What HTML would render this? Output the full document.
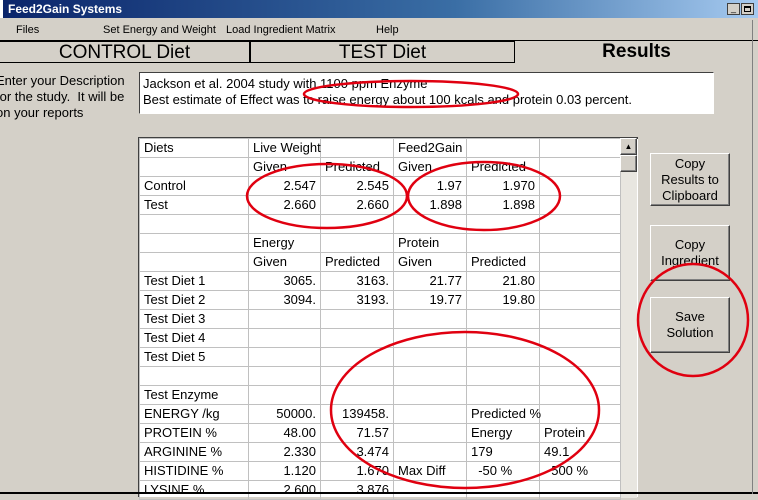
<!DOCTYPE html>
<html><head><style>
*{margin:0;padding:0;box-sizing:border-box}
body{width:758px;height:494px;background:#d4d0c8;font-family:"Liberation Sans",sans-serif;position:relative;overflow:hidden;color:#000}
.a{position:absolute}
#title{left:0;top:0;width:758px;height:18px;background:linear-gradient(90deg,#0a246a,#3a6ea5 60%,#a6caf0);color:#fff;font-weight:bold;font-size:12px;line-height:18px;padding-left:8px}
.menu{font-size:11px;top:24px}
.tab{font-size:19px;top:40px;height:22px;line-height:22px;text-align:center;border:1px solid #000;border-bottom:none;background:#d4d0c8}
table{border-collapse:collapse;table-layout:fixed;font-size:13px}
td{height:19px;border:1px solid #c0c0c0;padding:0 4px;white-space:nowrap;overflow:visible;line-height:18px}
td.r{text-align:right}
.btn{background:#d4d0c8;border:1px solid;border-color:#fff #404040 #404040 #fff;box-shadow:inset -1px -1px #808080;font-size:13px;text-align:center;line-height:16px;display:flex;align-items:center;justify-content:center}
</style></head><body>
<div class="a" id="title">Feed2Gain Systems</div>
<div class="a" style="left:0;top:0;width:3px;height:18px;background:#fff"></div>
<div class="a" style="left:727px;top:3px;width:13px;height:12px;background:#d4d0c8;border:1px solid #404040;font-size:9px;line-height:9px;text-align:center">_</div>
<div class="a" style="left:741px;top:3px;width:13px;height:12px;background:#d4d0c8;border:1px solid #404040"><div style="margin:2px;width:7px;height:6px;border:1px solid #000;border-top-width:2px"></div></div>
<div class="a menu" style="left:16px">Files</div>
<div class="a menu" style="left:103px">Set Energy and Weight</div>
<div class="a menu" style="left:226px">Load Ingredient Matrix</div>
<div class="a menu" style="left:376px">Help</div>
<div class="a" style="left:0;top:40px;width:758px;height:1px;background:#000"></div>
<div class="a tab" style="left:0;width:250px;border-left:none;border-bottom:1px solid #000;top:41px">CONTROL Diet</div>
<div class="a tab" style="left:250px;width:265px;border-bottom:1px solid #000;top:41px">TEST Diet</div>
<div class="a" style="left:515px;top:41px;width:243px;height:22px;font-size:19px;font-weight:bold;line-height:22px;text-align:center">Results</div>
<div class="a" style="left:0;top:73px;font-size:13px;line-height:16px;width:135px;margin-left:-4px">Enter your Description<br>for the study.&nbsp; It will be<br>on your reports</div>
<div class="a" style="left:139px;top:72px;width:575px;height:42px;background:#fff;border:1px solid;border-color:#404040 #fff #fff #404040;font-size:13px;line-height:16px;padding:3px 3px">Jackson et al. 2004 study with 1100 ppm Enzyme<br>Best estimate of Effect was to raise energy about 100 kcals and protein 0.03 percent.</div>
<div class="a" style="left:138px;top:137px;width:500px;height:360px;background:#fff;border-left:2px solid #404040;border-top:2px solid #404040"></div>
<table class="a" style="left:139px;top:138px;width:481px">
<colgroup><col style="width:109px"><col style="width:72px"><col style="width:73px"><col style="width:73px"><col style="width:73px"><col style="width:81px"></colgroup>
<tr><td>Diets</td><td>Live Weight</td><td></td><td>Feed2Gain</td><td></td><td></td></tr>
<tr><td></td><td>Given</td><td>Predicted</td><td>Given</td><td>Predicted</td><td></td></tr>
<tr><td>Control</td><td class="r">2.547</td><td class="r">2.545</td><td class="r">1.97</td><td class="r">1.970</td><td></td></tr>
<tr><td>Test</td><td class="r">2.660</td><td class="r">2.660</td><td class="r">1.898</td><td class="r">1.898</td><td></td></tr>
<tr><td></td><td></td><td></td><td></td><td></td><td></td></tr>
<tr><td></td><td>Energy</td><td></td><td>Protein</td><td></td><td></td></tr>
<tr><td></td><td>Given</td><td>Predicted</td><td>Given</td><td>Predicted</td><td></td></tr>
<tr><td>Test Diet 1</td><td class="r">3065.</td><td class="r">3163.</td><td class="r">21.77</td><td class="r">21.80</td><td></td></tr>
<tr><td>Test Diet 2</td><td class="r">3094.</td><td class="r">3193.</td><td class="r">19.77</td><td class="r">19.80</td><td></td></tr>
<tr><td>Test Diet 3</td><td></td><td></td><td></td><td></td><td></td></tr>
<tr><td>Test Diet 4</td><td></td><td></td><td></td><td></td><td></td></tr>
<tr><td>Test Diet 5</td><td></td><td></td><td></td><td></td><td></td></tr>
<tr><td></td><td></td><td></td><td></td><td></td><td></td></tr>
<tr><td>Test Enzyme</td><td></td><td></td><td></td><td></td><td></td></tr>
<tr><td>ENERGY /kg</td><td class="r">50000.</td><td class="r">139458.</td><td></td><td>Predicted %</td><td></td></tr>
<tr><td>PROTEIN %</td><td class="r">48.00</td><td class="r">71.57</td><td></td><td>Energy</td><td>Protein</td></tr>
<tr><td>ARGININE %</td><td class="r">2.330</td><td class="r">3.474</td><td></td><td>179</td><td>49.1</td></tr>
<tr><td>HISTIDINE %</td><td class="r">1.120</td><td class="r">1.670</td><td>Max Diff</td><td>&nbsp;&nbsp;-50 %</td><td>&nbsp;&nbsp;500 %</td></tr>
<tr><td>LYSINE %</td><td class="r">2.600</td><td class="r">3.876</td><td></td><td></td><td></td></tr>
</table>
<div class="a" style="left:620px;top:138px;width:17px;height:360px;background:#e8e6e0;border-left:1px solid #c0c0c0"></div>
<div class="a btn" style="left:620px;top:138px;width:17px;height:17px;font-size:8px">▲</div>
<div class="a btn" style="left:620px;top:155px;width:17px;height:17px"></div>
<div class="a" style="left:0;top:492px;width:758px;height:2px;background:#000"></div>
<div class="a" style="left:752px;top:20px;width:1px;height:474px;background:#808080"></div>
<div class="a btn" style="left:650px;top:153px;width:80px;height:53px">Copy<br>Results to<br>Clipboard</div>
<div class="a btn" style="left:650px;top:225px;width:80px;height:56px">Copy<br>Ingredient</div>
<div class="a btn" style="left:650px;top:297px;width:80px;height:56px">Save<br>Solution</div>
<svg class="a" style="left:0;top:0" width="758" height="494" fill="none" stroke="#e00010" stroke-width="2.5">
<ellipse cx="411" cy="94" rx="107" ry="13"/>
<ellipse cx="327" cy="196" rx="80" ry="32"/>
<ellipse cx="484" cy="196" rx="76" ry="34"/>
<ellipse cx="693" cy="320" rx="55" ry="56"/>
<ellipse cx="465" cy="410" rx="134" ry="78"/>
</svg>
</body></html>
